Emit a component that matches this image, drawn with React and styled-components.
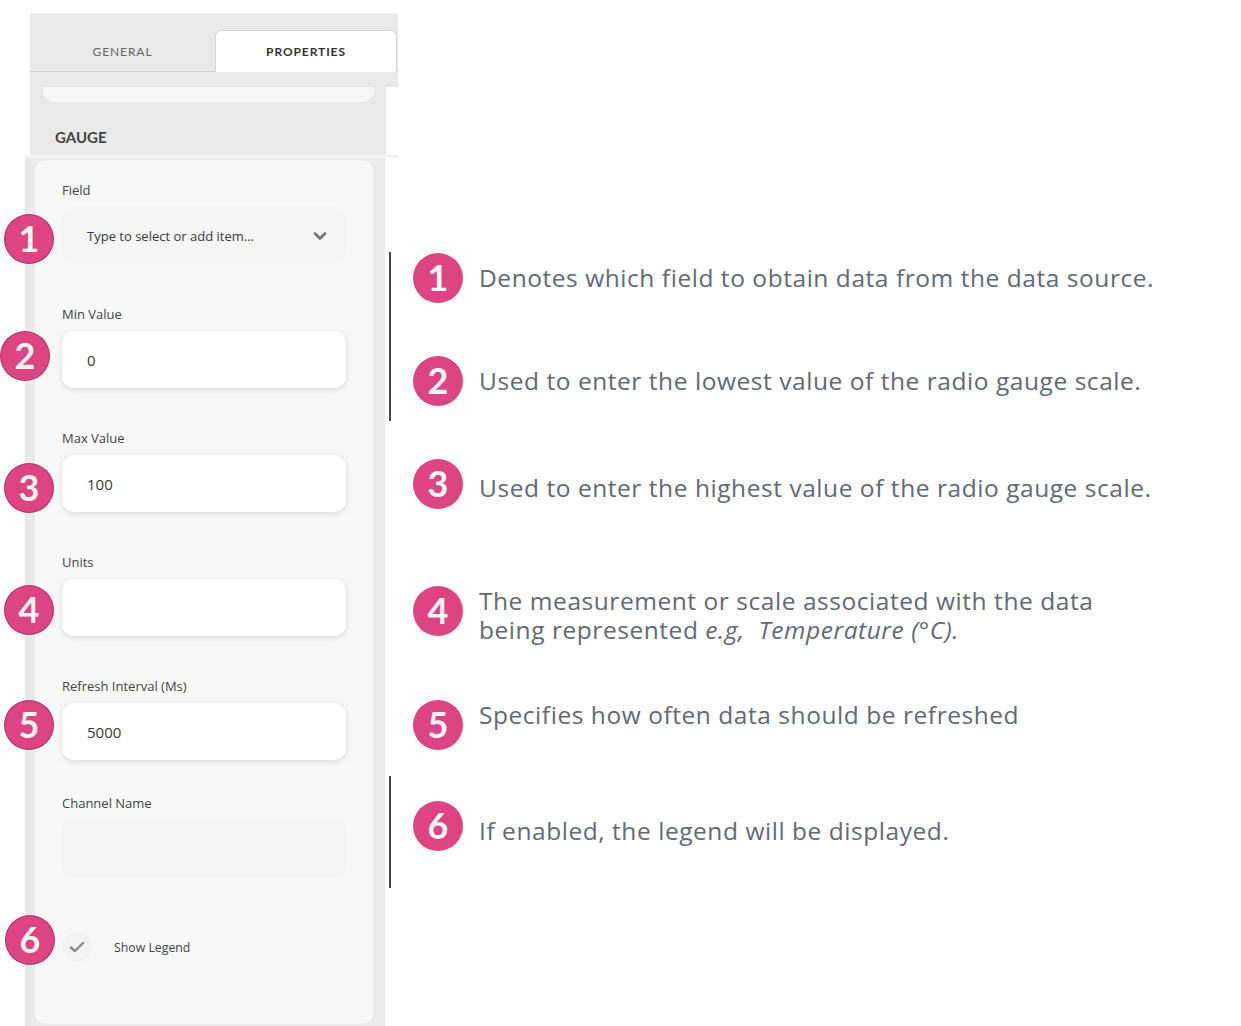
import React from "react";
import styled, { createGlobalStyle } from "styled-components";

const Global = createGlobalStyle`
  html, body { margin: 0; padding: 0; background: #ffffff; }
  body { font-family: "Open Sans", "Noto Sans", sans-serif; }
  * { box-sizing: border-box; }
`;

const Page = styled.div`
  display: flex;
  align-items: flex-start;
  width: 1241px;
  height: 1026px;
  overflow: hidden;
`;

const Panel = styled.div`
  flex: 0 0 389px;
  width: 389px;
  min-width: 0;
  display: flex;
  flex-direction: column;
  padding-top: 13px;
`;

const TabBar = styled.div`
  flex: none;
  margin-left: 30px;
  width: 368px;
  height: 59px;
  padding-top: 17px;
  background: #e9e9e9;
  border-top: 1px solid #f1f1f1;
  border-bottom: 1px solid #d2d2d2;
  display: flex;
  align-items: flex-end;
`;

const Tab = styled.div`
  width: ${(p) => (p.$active ? "182px" : "185px")};
  height: 42px;
  margin-bottom: -1px;
  display: flex;
  align-items: center;
  justify-content: center;
  font-family: Lato, "Noto Sans", sans-serif;
  font-size: 12px;
  letter-spacing: 0.9px;
  text-transform: uppercase;
  color: ${(p) => (p.$active ? "#333333" : "#666666")};
  font-weight: ${(p) => (p.$active ? 700 : 400)};
  background: ${(p) => (p.$active ? "#ffffff" : "transparent")};
  border: ${(p) => (p.$active ? "1px solid #d6d6d6" : "none")};
  border-bottom: none;
  border-radius: 6px 6px 0 0;
`;

const StripTop = styled.div`
  flex: none;
  margin-left: 30px;
  width: 368px;
  height: 15px;
  background: #e9e9e9;
`;

const GaugeArea = styled.div`
  margin-left: 30px;
  width: 356px;
  background: #e9e9e9;
  padding: 0 0 8px 0;
`;

const FadedCard = styled.div`
  margin-left: 13px;
  width: 331px;
  height: 15px;
  background: #f6f6f6;
  border-radius: 0 0 12px 12px;
`;

const Heading = styled.div`
  margin: 25px 0 0 25px;
  font-family: Lato, "Noto Sans", sans-serif;
  font-size: 15px;
  line-height: 20px;
  font-weight: 700;
  color: #444444;
`;

const Divider = styled.div`
  flex: none;
  margin-left: 25px;
  width: 373px;
  height: 3px;
  background: #f4f4f4;
`;

const Body = styled.div`
  margin-left: 25px;
  width: 360px;
  background: #e9e9e9;
  padding: 2px 12px 2px 10px;
`;

const Card = styled.div`
  height: 864px;
  background: #f8f8f8;
  border-radius: 10px;
  padding: 22px 0 0 27px;
  display: flex;
  flex-direction: column;
`;

const Field = styled.div`
  display: flex;
  flex-direction: column;
  gap: 8px;
  margin-bottom: ${(p) => p.$mb}px;
`;

const Label = styled.div`
  font-family: "Open Sans", "Noto Sans", sans-serif;
  font-size: 13px;
  line-height: 17px;
  color: #444444;
`;

const InputWrap = styled.div`
  position: relative;
  width: 284px;
  height: 57px;
  border-radius: 12px;
  background: ${(p) => (p.$muted ? "#f5f5f5" : "#ffffff")};
  box-shadow: ${(p) => (p.$muted ? "none" : "0 2px 6px rgba(0,0,0,0.13)")};
  display: flex;
  align-items: center;
  padding: 0 19px 0 25px;
  justify-content: space-between;
`;

const Value = styled.span`
  font-family: "Open Sans", "Noto Sans", sans-serif;
  font-size: ${(p) => (p.$small ? "13px" : "15px")};
  color: #3a3a3a;
`;

const Badge = styled.div`
  position: absolute;
  left: ${(p) => p.$dx}px;
  top: ${(p) => p.$dy}px;
  width: 50px;
  height: 50px;
  border-radius: 50%;
  background: #dc4484;
  border: 1px solid rgba(120, 20, 60, 0.45);
  color: #f4f4f4;
  display: flex;
  align-items: center;
  justify-content: center;
  font-family: Lato, "Noto Sans", sans-serif;
  font-weight: 700;
  font-size: 36px;
  line-height: 1;
  padding-bottom: 2px;
`;

const CheckRow = styled.div`
  position: relative;
  margin-top: 55px;
  display: flex;
  align-items: center;
  height: 30px;
  gap: 22px;
`;

const CheckCircle = styled.div`
  width: 30px;
  height: 30px;
  border-radius: 50%;
  background: #f3f3f3;
  display: flex;
  align-items: center;
  justify-content: center;
`;

const CheckText = styled.span`
  font-family: "Open Sans", "Noto Sans", sans-serif;
  font-size: 12.3px;
  color: #444444;
`;

const Notes = styled.div`
  flex: 1;
  padding-top: 252px;
  display: flex;
  flex-direction: column;
`;

const Group = styled.div`
  border-left: ${(p) => (p.$line ? "2px solid #474747" : "2px solid transparent")};
  padding: ${(p) => p.$pt}px 0 ${(p) => p.$pb}px 22px;
  margin-top: ${(p) => p.$mt}px;
  display: flex;
  flex-direction: column;
`;

const Row = styled.div`
  display: flex;
  align-items: flex-start;
  gap: 16px;
  margin-top: ${(p) => p.$mt || 0}px;
`;

const NoteBadge = styled.div`
  flex: 0 0 50px;
  width: 50px;
  height: 50px;
  border-radius: 50%;
  background: #dc4484;
  color: #f6f6f6;
  display: flex;
  align-items: center;
  justify-content: center;
  font-family: Lato, "Noto Sans", sans-serif;
  font-weight: 700;
  font-size: 36px;
  line-height: 1;
  padding-bottom: 2px;
`;

const NoteText = styled.div`
  padding-top: ${(p) => p.$pt}px;
  font-family: "Open Sans", "Noto Sans", sans-serif;
  font-size: 24.5px;
  line-height: 29px;
  font-weight: 400;
  color: #646974;
  letter-spacing: 0.55px;
  white-space: nowrap;
  em { font-style: italic; }
`;

const Chevron = () => (
  <svg width="14" height="10" viewBox="0 0 14 10">
    <polyline points="2,2.5 7,7.5 12,2.5" fill="none" stroke="#777" strokeWidth="2.6" strokeLinecap="round" strokeLinejoin="round" />
  </svg>
);

const Tick = () => (
  <svg width="16" height="12" viewBox="0 0 16 12">
    <polyline points="2,6.5 6,10 14,2" fill="none" stroke="#8a8a8a" strokeWidth="2.4" strokeLinecap="round" strokeLinejoin="round" />
  </svg>
);

const fields = [
  { label: "Field", value: "Type to select or add item...", select: true, badge: 1, dx: -58, dy: 7, mb: 42 },
  { label: "Min Value", value: "0", badge: 2, dx: -62, dy: 0, mb: 42 },
  { label: "Max Value", value: "100", badge: 3, dx: -58, dy: 8, mb: 42 },
  { label: "Units", value: "", badge: 4, dx: -58, dy: 6, mb: 42 },
  { label: "Refresh Interval (Ms)", value: "5000", badge: 5, dx: -58, dy: -3, mb: 35 },
  { label: "Channel Name", value: "", muted: true, mb: 0 },
];

export default function App() {
  return (
    <>
      <Global />
      <Page>
        <Panel>
          <TabBar>
            <Tab>General</Tab>
            <Tab $active>Properties</Tab>
          </TabBar>
          <StripTop />
          <GaugeArea>
            <FadedCard />
            <Heading>GAUGE</Heading>
          </GaugeArea>
          <Divider />
          <Body>
            <Card>
              {fields.map((f) => (
                <Field key={f.label} $mb={f.mb}>
                  <Label>{f.label}</Label>
                  <InputWrap $muted={f.select || f.muted}>
                    <Value $small={f.select}>{f.value}</Value>
                    {f.select && <Chevron />}
                    {f.badge && (
                      <Badge $dx={f.dx} $dy={f.dy}>{f.badge}</Badge>
                    )}
                  </InputWrap>
                </Field>
              ))}
              <CheckRow>
                <CheckCircle>
                  <Tick />
                </CheckCircle>
                <CheckText>Show Legend</CheckText>
                <Badge $dx={-57} $dy={-17}>6</Badge>
              </CheckRow>
            </Card>
          </Body>
        </Panel>
        <Notes>
          <Group $line $pt={1} $pb={15} $mt={0}>
            <Row>
              <NoteBadge>1</NoteBadge>
              <NoteText $pt={10}>Denotes which field to obtain data from the data source.</NoteText>
            </Row>
            <Row $mt={53}>
              <NoteBadge>2</NoteBadge>
              <NoteText $pt={10}>Used to enter the lowest value of the radio gauge scale.</NoteText>
            </Row>
          </Group>
          <Group $pt={0} $pb={0} $mt={38}>
            <Row>
              <NoteBadge>3</NoteBadge>
              <NoteText $pt={14}>Used to enter the highest value of the radio gauge scale.</NoteText>
            </Row>
            <Row $mt={77}>
              <NoteBadge>4</NoteBadge>
              <NoteText $pt={0}>
                The measurement or scale associated with the data
                <br />
                being represented <em>e.g,&nbsp; Temperature (°C).</em>
              </NoteText>
            </Row>
            <Row $mt={56}>
              <NoteBadge>5</NoteBadge>
              <NoteText $pt={0}>Specifies how often data should be refreshed</NoteText>
            </Row>
          </Group>
          <Group $line $pt={25} $pb={37} $mt={26}>
            <Row>
              <NoteBadge>6</NoteBadge>
              <NoteText $pt={15}>If enabled, the legend will be displayed.</NoteText>
            </Row>
          </Group>
        </Notes>
      </Page>
    </>
  );
}
